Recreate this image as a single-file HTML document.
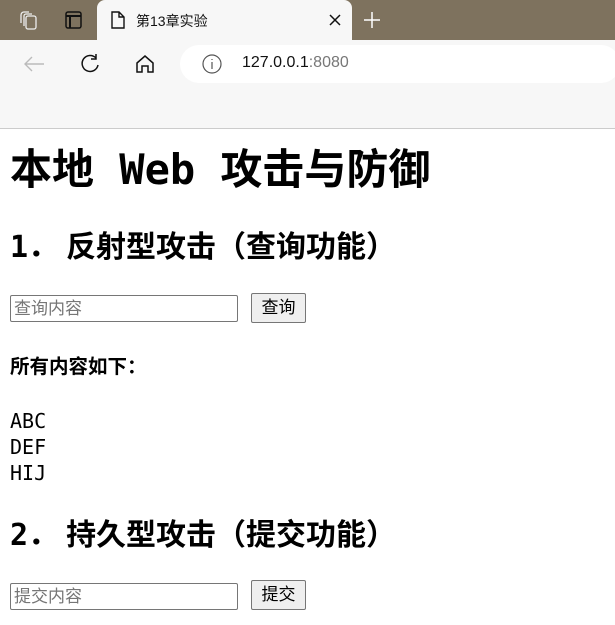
<!DOCTYPE html>
<html><head><meta charset="utf-8"><style>
*{margin:0;padding:0;box-sizing:border-box}
body{width:615px;height:625px;overflow:hidden;background:#fff;position:relative;font-family:"Liberation Sans","Noto Sans CJK SC",sans-serif}
.a{position:absolute;white-space:nowrap}
.mono{font-family:"DejaVu Sans Mono","Noto Sans CJK SC",monospace;font-weight:bold;color:#000}
.inp{position:absolute;border:1px solid #767676;border-radius:2px;background:#fff;height:27px;width:228px;left:10px;font-size:17px;color:#767676;padding:1px 3px;line-height:23px;font-family:"Liberation Sans","Noto Sans CJK SC",sans-serif}
.btn{position:absolute;border:1px solid #767676;border-radius:2px;background:#efefef;height:30px;width:55px;left:251px;font-size:17px;color:#000;text-align:center;line-height:27px;font-family:"Liberation Sans","Noto Sans CJK SC",sans-serif}
</style></head><body>
<div class="a" style="left:0;top:0;width:615px;height:40px;background:#7e725e"></div>
<div class="a" style="left:97px;top:0;width:255px;height:40px;background:#f7f7f7;border-radius:8px 8px 0 0"></div>
<svg class="a" style="left:18px;top:10px" width="22" height="22" viewBox="0 0 22 22" fill="none" stroke="#eee" stroke-width="1.3"><rect x="8" y="6" width="10" height="13" rx="2"/><path d="M6 16V6a2 2 0 0 1 2-2h6M3 13V5a3 3 0 0 1 3-3h5"/></svg>
<svg class="a" style="left:64px;top:10px" width="20" height="20" viewBox="0 0 20 20" fill="none" stroke="#111" stroke-width="1.5"><rect x="2" y="2" width="15" height="16" rx="2"/><path d="M2 6h15M6 6v12" stroke-width="2"/></svg>
<svg class="a" style="left:110px;top:10px" width="16" height="20" viewBox="0 0 16 20" fill="none" stroke="#111" stroke-width="1.4"><path d="M2 2h7l5 5v11H2z M9 2v5h5"/></svg>
<div class="a" style="left:136px;top:11px;font-size:14px;color:#111">第13章实验</div>
<svg class="a" style="left:329px;top:14px" width="12" height="12" viewBox="0 0 12 12" stroke="#111" stroke-width="1.5"><path d="M1 1l10 10M11 1L1 11"/></svg>
<svg class="a" style="left:362px;top:10px" width="20" height="20" viewBox="0 0 20 20" stroke="#fff" stroke-width="1.5"><path d="M10 2v16M2 10h16"/></svg>
<div class="a" style="left:0;top:40px;width:615px;height:88px;background:#f7f7f7"></div>
<div class="a" style="left:0;top:128px;width:615px;height:1px;background:#ccc"></div>
<svg class="a" style="left:22px;top:54px" width="24" height="20" viewBox="0 0 24 20" fill="none" stroke="#bbb" stroke-width="1.4"><path d="M22 10H3M10 3l-7 7 7 7"/></svg>
<svg class="a" style="left:78px;top:52px" width="24" height="24" viewBox="0 0 24 24" fill="none" stroke="#111" stroke-width="1.5"><path d="M18 6A8 8 0 1 0 20 13M18 2v5h-5"/></svg>
<svg class="a" style="left:134px;top:53px" width="22" height="22" viewBox="0 0 22 22" fill="none" stroke="#111" stroke-width="1.5"><path d="M3 10L11 3l8 7v9h-5v-6h-6v6H3z"/></svg>
<div class="a" style="left:180px;top:45px;width:440px;height:38px;background:#fff;border-radius:19px"></div>
<svg class="a" style="left:201px;top:53px" width="22" height="22" viewBox="0 0 22 22" fill="none" stroke="#555" stroke-width="1.2"><circle cx="11" cy="11" r="9"/><path d="M11 9v7M11 6v1"/></svg>
<div class="a" style="left:242px;top:54px;font-size:16px;color:#111">127.0.0.1<span style="color:#777">:8080</span></div>

<div class="a mono" style="left:10px;top:144px;font-size:42px;line-height:52px">本地 Web 攻击与防御</div>
<div class="a mono" style="left:10px;top:228px;font-size:30px;line-height:40px"><span style="margin-right:8px">1．</span>反射型攻击（查询功能）</div>
<div class="inp" style="top:295px">查询内容</div>
<div class="btn" style="top:293px">查询</div>
<div class="a mono" style="left:10px;top:355px;font-size:19.5px;line-height:24px">所有内容如下：</div>
<div class="a mono" style="left:10px;top:408px;font-size:20px;line-height:26px;font-weight:normal">ABC<br>DEF<br>HIJ</div>
<div class="a mono" style="left:10px;top:516px;font-size:30px;line-height:40px"><span style="margin-right:8px">2．</span>持久型攻击（提交功能）</div>
<div class="inp" style="top:583px">提交内容</div>
<div class="btn" style="top:580px">提交</div>
</body></html>
